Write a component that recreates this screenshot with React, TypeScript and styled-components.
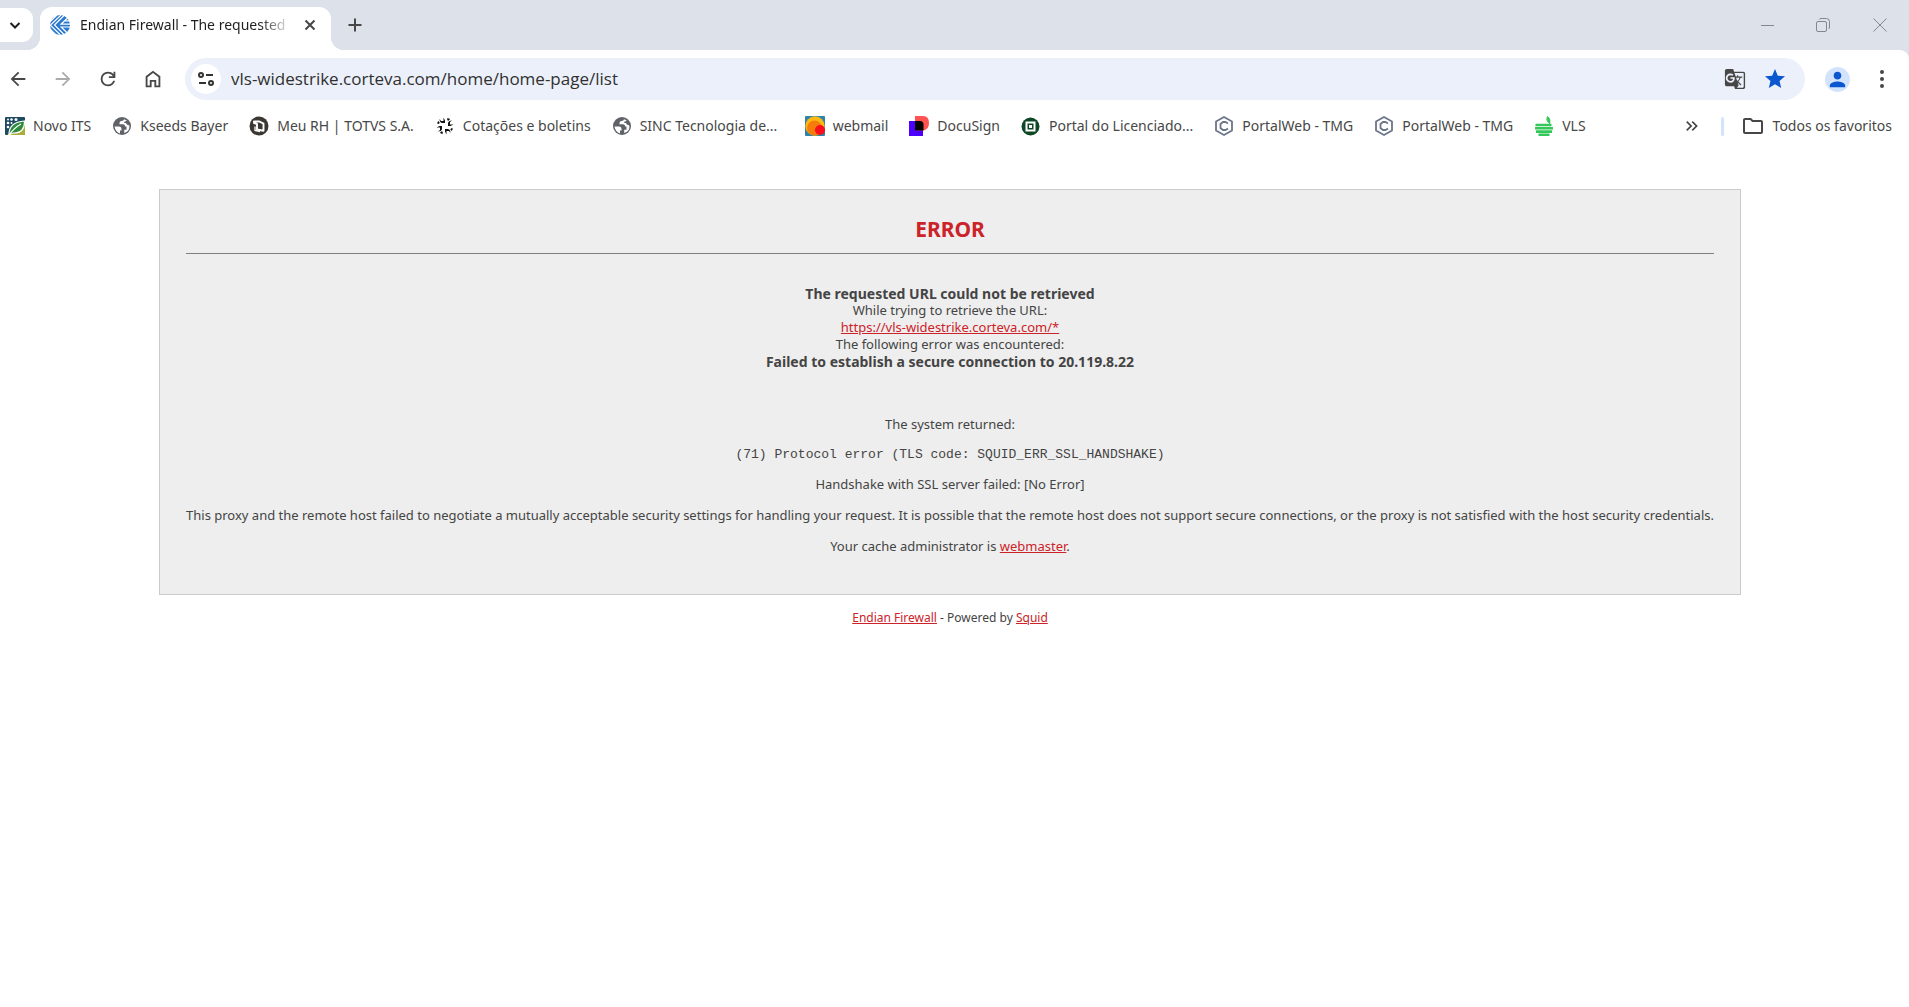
import React from "react";
import styled, { createGlobalStyle } from "styled-components";
import { MdGTranslate, MdKeyboardDoubleArrowRight, MdOutlineFolder, MdPerson, MdStar } from "react-icons/md";

const ink = "#474747";

const GlobalStyle = createGlobalStyle`
  * { box-sizing: border-box; }
  body { margin: 0; background: #fff; font-family: "Noto Sans", sans-serif; }
  svg { display: block; flex: none; }
`;

/* ---------- browser chrome ---------- */

const Button = styled.button<{ $w: number; $faded?: boolean }>`
  display: flex;
  align-items: center;
  justify-content: center;
  flex: none;
  width: ${(p) => p.$w}px;
  height: 34px;
  padding: 0;
  border: 0;
  background: none;
  color: ${(p) => (p.$faded ? "#ababab" : ink)};
`;

const TabStrip = styled.header`
  display: flex;
  align-items: center;
  height: 50px;
  background: #dde1e9;
`;

const TabSearch = styled(Button)`
  padding-right: 3px;
  border-radius: 0 11px 11px 0;
  background: #fff;
  color: #1f1f1f;
`;

const Tab = styled.div`
  position: relative;
  display: flex;
  align-items: center;
  align-self: flex-end;
  width: 291px;
  height: 43px;
  margin-left: 7px;
  padding: 0 8px 7px 10px;
  border-radius: 12px 12px 0 0;
  background: #fff;

  &::before,
  &::after {
    content: "";
    position: absolute;
    bottom: 0;
    width: 13px;
    height: 13px;
  }
  &::before {
    right: 100%;
    background: radial-gradient(circle at 0 0, transparent 13px, #fff 13px);
  }
  &::after {
    left: 100%;
    background: radial-gradient(circle at 100% 0, transparent 13px, #fff 13px);
  }
`;

const TabTitle = styled.span`
  flex: 1;
  margin-left: 10px;
  overflow: hidden;
  white-space: nowrap;
  font: 14px/20px "Noto Sans", sans-serif;
  color: #1f1f1f;
  mask-image: linear-gradient(to right, #000 180px, transparent 212px);
`;

const WindowControls = styled.div`
  display: flex;
  margin-left: auto;
  color: #84878b;
`;

const WindowButton = styled(Button)`
  color: inherit;
`;

const ToolbarBack = styled.div`
  background: #dde1e9;
`;

const Toolbar = styled.div`
  display: flex;
  align-items: center;
  height: 58px;
  padding: 0 10px 0 1px;
  border-radius: 0 9px 0 0;
  background: #fff;
`;

const NavButtons = styled.nav`
  display: flex;
  gap: 11px;
  margin-right: 15px;
`;

const AddressBar = styled.div`
  display: flex;
  align-items: center;
  flex: 1;
  height: 42px;
  padding: 0 13px 0 6px;
  border-radius: 21px;
  background: #ecf0fa;
`;

const SiteInfo = styled(Button)`
  height: 30px;
  border-radius: 15px;
  background: #fff;
  color: #333;
`;

const Address = styled.input`
  flex: 1;
  min-width: 0;
  padding: 0 0 0 10px;
  border: 0;
  background: none;
  font: 17px/24px "Open Sans", sans-serif;
  color: #303030;
`;

const AddressActions = styled.div`
  display: flex;
  gap: 6px;
`;

const StarButton = styled(Button)`
  color: #0b57d0;
`;

const Profile = styled.span`
  display: flex;
  align-items: center;
  justify-content: center;
  width: 25px;
  height: 25px;
  border-radius: 50%;
  background: #d3e3fd;
  color: #0b57d0;
`;

const ProfileButton = styled(Button)`
  margin-left: 15px;
  margin-right: 11px;
`;

const BookmarkBar = styled.nav`
  display: flex;
  align-items: center;
  height: 36px;
  padding: 0 17px 0 5px;
  gap: 21px;
`;

const Bookmark = styled.a`
  display: flex;
  align-items: center;
  gap: 8px;
  flex: none;
  color: ${ink};
  font: 14px/20px "Noto Sans", sans-serif;
  text-decoration: none;
  white-space: nowrap;
`;

/* Shortened titles fill the widest label that the bar allows. */
const BookmarkLabel = styled.span<{ $shortened?: boolean }>`
  min-width: ${(p) => (p.$shortened ? "144px" : "0")};
`;

const BookmarkEnd = styled.div`
  display: flex;
  align-items: center;
  gap: 17px;
  margin-left: auto;
`;

const Divider = styled.span`
  width: 3px;
  height: 19px;
  border-radius: 2px;
  background: #d3e3fd;
`;

/* ---------- error page ---------- */

const Page = styled.main`
  display: flex;
  flex-direction: column;
  align-items: center;
  padding: 45px 9px 14px 0;
  color: #444;
  font: 13px/17px "Noto Sans", sans-serif;
  text-align: center;
`;

const Card = styled.section`
  max-width: 100%;
  padding: 24px 26px 39px;
  border: 1px solid #ccc;
  background: #eee;
`;

const Heading = styled.h1`
  margin: 0 0 31px;
  padding-bottom: 9px;
  border-bottom: 1px solid #808080;
  color: #cc2229;
  font-size: 21px;
  line-height: 30px;
`;

const Summary = styled.div`
  margin-bottom: 46px;
`;

const Line = styled.div``;

const Strong = styled.strong`
  display: block;
  font-size: 14px;
`;

const Details = styled.div`
  display: flex;
  flex-direction: column;
  gap: 14px;
`;

const Paragraph = styled.p`
  margin: 0;
`;

const Code = styled.pre`
  margin: 0;
  font: 13px/15px "Liberation Mono", monospace;
`;

const Link = styled.a`
  color: #cc2229;
  text-decoration: underline;
`;

const Footer = styled.footer`
  margin-top: 14px;
  font-size: 12px;
`;

/* ---------- icons ---------- */

const Solid = ({ d, size = 22 }: { d: string; size?: number }) => (
  <svg width={size} height={size} viewBox="0 0 24 24" fill="currentColor" fillRule="evenodd">
    <path d={d} />
  </svg>
);

const Stroke = ({ d, size, width = 2 }: { d: string; size: number; width?: number }) => (
  <svg width={size} height={size} viewBox={`0 0 ${size} ${size}`} fill="none" stroke="currentColor" strokeWidth={width}>
    <path d={d} />
  </svg>
);

const backPath = "M7.8 13l5.6 5.6L12 20l-8-8 8-8 1.4 1.4L7.8 11H20v2z";
const forwardPath = "M16.2 13l-5.6 5.6L12 20l8-8-8-8-1.4 1.4 5.6 5.6H4v2z";
const reloadPath =
  "M12 20q-3.35 0-5.675-2.325T4 12t2.325-5.675T12 4q1.725 0 3.3.713T18 6.75V4h2v7h-7V9h4.2q-.8-1.4-2.187-2.2T12 6Q9.5 6 7.75 7.75T6 12t1.75 4.25T12 18q1.925 0 3.475-1.1T17.65 14h2.1q-.7 2.65-2.85 4.325T12 20";
const homePath = "M4 21V9l8-6 8 6v12h-6.5v-6h-3v6zM6 19h2.5v-6h7v6H18v-9l-6-4.5L6 10z";

const TuneIcon = () => (
  <svg width="16" height="16" viewBox="0 0 16 16" fill="none" stroke="currentColor" strokeWidth="2">
    <circle cx="3" cy="4" r="2" />
    <path d="M8 4h7M1 12h7" />
    <circle cx="13" cy="12" r="2" />
  </svg>
);

const MaximizeIcon = () => (
  <svg width="14" height="14" viewBox="0 0 14 14" fill="none" stroke="currentColor">
    <rect x="0.5" y="3.5" width="10" height="10" rx="1.5" />
    <path d="M3 1.5Q3.5 .5 5 .5h5.500q3 0 3 3V9q0 1.500-1 2" />
  </svg>
);

const DotsIcon = () => (
  <svg width="4" height="18" viewBox="0 0 4 18" fill="currentColor">
    <circle cx="2" cy="2" r="2" />
    <circle cx="2" cy="9" r="2" />
    <circle cx="2" cy="16" r="2" />
  </svg>
);

const WeaveIcon = () => (
  <svg width="20" height="20" viewBox="0 0 20 20">
    <circle cx="10" cy="10" r="10" fill="#2a78cf" />
    <g fill="none" stroke="#fff" strokeWidth="1.200">
      <path d="M0 6.800L7 0M0 10.500L11 0M14.500 0L4.500 10l10 10M18 2.500L11 9.200h9M20 12H11.200l6.500 6.500" />
      <path d="M0 10l10.500 10M0 14l6 6M20 5.800h-5" />
    </g>
  </svg>
);

const LeafIcon = () => (
  <svg width="20" height="20" viewBox="0 0 20 20">
    <rect y="1" width="20" height="18" rx="1" fill="#1d4a5f" />
    <path d="M20 6v12q0 1-1 1H2L8 15z" fill="#a9ae3e" />
    <g fill="#fff">
      <circle cx="3" cy="3.500" r="1" />
      <circle cx="6.500" cy="3.500" r="1.300" />
      <circle cx="11" cy="3.500" r="1.500" />
      <circle cx="3" cy="7" r="1.300" />
      <circle cx="6.500" cy="7" r="1" />
      <circle cx="3" cy="11" r="1.300" />
    </g>
    <path d="M4 18.500Q4 6 19.500 5 20 17 8.500 17z" fill="#2e8b3d" stroke="#fff" strokeWidth="1.200" />
    <path d="M4 19Q9 12 16 8" fill="none" stroke="#fff" strokeWidth="1.300" />
  </svg>
);

const GlobeIcon = () => (
  <svg width="20" height="20" viewBox="0 0 20 20">
    <circle cx="10" cy="10" r="9" fill="#5f6368" />
    <path d="M2.500 10.500H7q2.500 0 2.500 2.500v1.500h-1.500v3Q3.500 16 2.500 10.500z" fill="#fff" />
    <path
      d="M12 3.200Q12 5 9.500 5q-2 0-2 2v1.300h3.500q2 0 2.200 2.200h1.300v3.200h-2.300v3.300Q17.500 15.500 17.500 10q-1-1.500-2.500-1.200l-1-1.800h-1.800l.3-1.500q1.500 0 2.300-1z"
      fill="#fff"
    />
  </svg>
);

const TotvsIcon = () => (
  <svg width="20" height="20" viewBox="0 0 20 20" fill="none">
    <circle cx="10" cy="10" r="9.500" fill="#3b3833" />
    <path d="M5 5.500h5.500l4 2.200v7l-6.500-1.200V8L5 7z" stroke="#fff" strokeWidth="1.900" strokeLinejoin="round" />
    <path d="M6 10.500v4l5 1" stroke="#fff" strokeWidth="1.300" />
  </svg>
);

const FlowerIcon = () => (
  <svg width="20" height="20" viewBox="0 0 20 20" fill="#111">
    {[0, 90, 180, 270].map((a) => (
      <g key={a} transform={`rotate(${a} 10 10)`}>
        <path d="M4.500 3L6 5h2.500V1.500L10 4.500V7H7Q4.500 6.500 4.500 3z" />
        <path d="M12 2.500q2-.5 3 .8l-1.500 1.400q-1.500 0-1.500-2.200z" />
      </g>
    ))}
    <circle cx="10" cy="10" r="2.800" fill="#fff" />
  </svg>
);

const WebmailIcon = () => (
  <svg width="20" height="20" viewBox="0 0 20 20">
    <clipPath id="mail">
      <rect width="20" height="20" rx="1" />
    </clipPath>
    <g clipPath="url(#mail)">
      <rect width="20" height="20" fill="#2f83a8" />
      <circle cx="10" cy="10" r="9.700" fill="#fdb913" />
      <circle cx="9.500" cy="12" r="7.500" fill="#f57c0a" />
      <circle cx="15" cy="14" r="5" fill="#fb0d1b" />
    </g>
  </svg>
);

const DocuSignIcon = () => (
  <svg width="20" height="20" viewBox="0 0 20 20">
    <path d="M0 5h14v15H0z" fill="#4c00ff" />
    <path d="M6 0h8q6 0 6 7t-6 7.500H6z" fill="#ff5252" />
    <path d="M6 5h5q3.500 0 3.500 3.500v6H6z" fill="#000" />
  </svg>
);

const PortalIcon = () => (
  <svg width="20" height="20" viewBox="0 0 20 20">
    <circle cx="9.500" cy="10.500" r="9" fill="#0d4726" />
    <rect x="5.500" y="6.500" width="8" height="8" fill="none" stroke="#fff" strokeWidth="2" />
    <rect x="8" y="9" width="3" height="3" fill="#fff" />
  </svg>
);

const HexIcon = () => (
  <svg width="20" height="20" viewBox="0 0 20 20" fill="none" stroke="#6b7588" strokeWidth="1.800">
    <path d="M10 1l8 4.500v9L10 19l-8-4.500v-9z" strokeLinejoin="round" />
    <path d="M14 7.500L11.500 6h-2.500L6.500 8v4L9 14h2.500l2.500-1.500" />
  </svg>
);

const VlsIcon = () => (
  <svg width="20" height="20" viewBox="0 0 20 20" fill="none" stroke="#34c759" strokeWidth="2.600">
    <path d="M1.500 9H17.500M1 12.300h18M2 15.600h16M4.500 18.700h11" />
    <path d="M16 7.500Q11.500 5 13.500 .5 17 3 15.500 8" fill="#34c759" strokeWidth="1" />
  </svg>
);

const bookmarks: [string, React.ComponentType][] = [
  ["Novo ITS", LeafIcon],
  ["Kseeds Bayer", GlobeIcon],
  ["Meu RH | TOTVS S.A.", TotvsIcon],
  ["Cotações e boletins", FlowerIcon],
  ["SINC Tecnologia de...", GlobeIcon],
  ["webmail", WebmailIcon],
  ["DocuSign", DocuSignIcon],
  ["Portal do Licenciado...", PortalIcon],
  ["PortalWeb - TMG", HexIcon],
  ["PortalWeb - TMG", HexIcon],
  ["VLS", VlsIcon],
];

export default function App() {
  return (
    <>
      <GlobalStyle />
      <TabStrip>
        <TabSearch $w={33} aria-label="Pesquisar guias">
          <Stroke size={12} width={2} d="M1.500 4L6 8.500 10.500 4" />
        </TabSearch>
        <Tab>
          <WeaveIcon />
          <TabTitle>Endian Firewall - The requested</TabTitle>
          <Button $w={26} aria-label="Fechar guia">
            <Stroke size={12} width={2} d="M1.500 1.500l9 9M10.500 1.500l-9 9" />
          </Button>
        </Tab>
        <Button $w={48} aria-label="Nova guia">
          <Stroke size={14} width={2} d="M7 .5v13M.5 7h13" />
        </Button>
        <WindowControls>
          <WindowButton $w={56} aria-label="Minimizar">
            <Stroke size={13} width={1} d="M0 6.500h13" />
          </WindowButton>
          <WindowButton $w={56} aria-label="Restaurar">
            <MaximizeIcon />
          </WindowButton>
          <WindowButton $w={58} aria-label="Fechar">
            <Stroke size={14} width={1} d="M.5 .5l13 13M13.500 .5l-13 13" />
          </WindowButton>
        </WindowControls>
      </TabStrip>

      <ToolbarBack>
        <Toolbar>
          <NavButtons>
            <Button $w={34} aria-label="Voltar">
              <Solid d={backPath} />
            </Button>
            <Button $w={34} $faded aria-label="Avançar">
              <Solid d={forwardPath} />
            </Button>
            <Button $w={34} aria-label="Recarregar">
              <Solid d={reloadPath} />
            </Button>
            <Button $w={34} aria-label="Página inicial">
              <Solid d={homePath} />
            </Button>
          </NavButtons>
          <AddressBar>
            <SiteInfo $w={30} aria-label="Informações do site">
              <TuneIcon />
            </SiteInfo>
            <Address aria-label="Endereço" defaultValue="vls-widestrike.corteva.com/home/home-page/list" />
            <AddressActions>
              <Button $w={34} aria-label="Traduzir">
                <MdGTranslate size={22} />
              </Button>
              <StarButton $w={34} aria-label="Favorito">
                <MdStar size={24} />
              </StarButton>
            </AddressActions>
          </AddressBar>
          <ProfileButton $w={34} aria-label="Perfil">
            <Profile>
              <MdPerson size={23} />
            </Profile>
          </ProfileButton>
          <Button $w={34} aria-label="Menu">
            <DotsIcon />
          </Button>
        </Toolbar>
      </ToolbarBack>

      <BookmarkBar>
        {bookmarks.map(([label, Icon], i) => (
          <Bookmark href="#" key={i}>
            <Icon />
            <BookmarkLabel $shortened={label.endsWith("...")}>{label}</BookmarkLabel>
          </Bookmark>
        ))}
        <BookmarkEnd>
          <Button $w={24} aria-label="Mais favoritos">
            <MdKeyboardDoubleArrowRight size={20} />
          </Button>
          <Divider />
          <Bookmark href="#">
            <MdOutlineFolder size={24} />
            Todos os favoritos
          </Bookmark>
        </BookmarkEnd>
      </BookmarkBar>

      <Page>
        <Card>
          <Heading>ERROR</Heading>
          <Summary>
            <Strong>The requested URL could not be retrieved</Strong>
            <Line>While trying to retrieve the URL:</Line>
            <Line>
              <Link href="#">https://vls-widestrike.corteva.com/*</Link>
            </Line>
            <Line>The following error was encountered:</Line>
            <Strong>Failed to establish a secure connection to 20.119.8.22</Strong>
          </Summary>
          <Details>
            <Paragraph>The system returned:</Paragraph>
            <Code>(71) Protocol error (TLS code: SQUID_ERR_SSL_HANDSHAKE)</Code>
            <Paragraph>Handshake with SSL server failed: [No Error]</Paragraph>
            <Paragraph>
              This proxy and the remote host failed to negotiate a mutually acceptable security settings for handling
              your request. It is possible that the remote host does not support secure connections, or the proxy is not
              satisfied with the host security credentials.
            </Paragraph>
            <Paragraph>
              Your cache administrator is <Link href="#">webmaster</Link>.
            </Paragraph>
          </Details>
        </Card>
        <Footer>
          <Link href="#">Endian Firewall</Link> - Powered by <Link href="#">Squid</Link>
        </Footer>
      </Page>
    </>
  );
}
